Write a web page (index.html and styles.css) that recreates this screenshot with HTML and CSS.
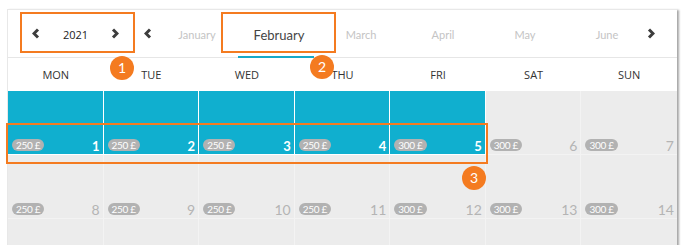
FILE: index.html
```html
<!DOCTYPE html>
<html lang="en">
<head>
    <meta charset="UTF-8">
    <meta name="viewport" content="width=device-width, initial-scale=1.0">
    <title>Price calendar</title>
    <link rel="stylesheet" href="styles.css">
</head>
<body>

    <div class="calendar">
        <div class="cal-header">
            <div class="year-nav">
                <span class="arrow"><svg width="8" height="11" viewBox="0 0 8 11"><polyline points="6,1.5 2,5.5 6,9.5" /></svg></span>
                <span class="year">2021</span>
                <span class="arrow"><svg width="8" height="11" viewBox="0 0 8 11"><polyline points="2,1.5 6,5.5 2,9.5" /></svg></span>
            </div>
            <span class="arrow month-arrow"><svg width="8" height="11" viewBox="0 0 8 11"><polyline points="6,1.5 2,5.5 6,9.5" /></svg></span>
            <div class="months">
                <span class="month">January</span>
                <span class="month active">February</span>
                <span class="month">March</span>
                <span class="month">April</span>
                <span class="month">May</span>
                <span class="month">June</span>
            </div>
            <span class="arrow month-arrow next"><svg width="8" height="11" viewBox="0 0 8 11"><polyline points="2,1.5 6,5.5 2,9.5" /></svg></span>
        </div>

        <div class="weekdays">
            <span>MON</span><span>TUE</span><span>WED</span><span>THU</span><span>FRI</span><span>SAT</span><span>SUN</span>
        </div>

        <div class="days">
            <div class="day booked"><span class="price">250 £</span><span class="num">1</span></div>
            <div class="day booked"><span class="price">250 £</span><span class="num">2</span></div>
            <div class="day booked"><span class="price">250 £</span><span class="num">3</span></div>
            <div class="day booked"><span class="price">250 £</span><span class="num">4</span></div>
            <div class="day booked"><span class="price">300 £</span><span class="num">5</span></div>
            <div class="day"><span class="price">300 £</span><span class="num">6</span></div>
            <div class="day"><span class="price">300 £</span><span class="num">7</span></div>

            <div class="day"><span class="price">250 £</span><span class="num">8</span></div>
            <div class="day"><span class="price">250 £</span><span class="num">9</span></div>
            <div class="day"><span class="price">250 £</span><span class="num">10</span></div>
            <div class="day"><span class="price">250 £</span><span class="num">11</span></div>
            <div class="day"><span class="price">300 £</span><span class="num">12</span></div>
            <div class="day"><span class="price">300 £</span><span class="num">13</span></div>
            <div class="day"><span class="price">300 £</span><span class="num">14</span></div>

            <div class="day"></div>
            <div class="day"></div>
            <div class="day"></div>
            <div class="day"></div>
            <div class="day"></div>
            <div class="day"></div>
            <div class="day"></div>
        </div>

        <!-- callouts -->
        <div class="mark mark-year"></div>
        <div class="mark mark-month"></div>
        <div class="mark mark-week"></div>
        <span class="badge badge-1">1</span>
        <span class="badge badge-2">2</span>
        <span class="badge badge-3">3</span>
    </div>

</body>
</html>
```

FILE: styles.css
```css
body {
    margin: 0;
    background: #fff;
    font-family: Lato, "Open Sans", sans-serif;
    overflow: hidden;
}
.calendar {
    position: relative;
    box-sizing: border-box;
    width: 670px;
    margin: 9px 0 0 7px;
    border-top: 1px solid #e8e8e8;
    border-left: 1px solid #e8e8e8;
    box-shadow: 2px 1px 2px rgba(0, 0, 0, 0.35);
    background: #fff;
}
.cal-header {
    display: flex;
    align-items: stretch;
    height: 47px;
    padding-left: 12px;
    border-bottom: 1px solid #e6e6e6;
}
.year-nav {
    display: flex;
    align-items: center;
    justify-content: space-between;
    width: 114px;
    padding: 0 15px 0 12px;
    box-sizing: border-box;
}
.year {
    font-family: "Open Sans", sans-serif;
    font-size: 11px;
    color: #222;
    padding-top: 2px;
}
.arrow {
    display: flex;
    align-items: center;
    justify-content: center;
}
.arrow polyline {
    fill: none;
    stroke: #3d3d3d;
    stroke-width: 3;
}
.month-arrow {
    width: 16px;
    margin-left: 6px;
}
.month-arrow.next {
    width: 8px;
    margin-left: -1px;
}
.months {
    display: flex;
}
.month {
    display: flex;
    align-items: center;
    justify-content: center;
    width: 82px;
    font-size: 11px;
    color: #c4c4c4;
    padding-top: 1px;
}
.month.active {
    font-size: 13px;
    color: #444;
    margin-bottom: -1px;
    background: linear-gradient(#16a9c8, #16a9c8) left bottom / 76px 2px no-repeat;
}
.weekdays {
    display: grid;
    grid-template-columns: repeat(7, 1fr);
    height: 33px;
    align-items: center;
    text-align: center;
    font-family: "Open Sans", sans-serif;
    font-size: 11px;
    color: #333;
}
.days {
    display: grid;
    grid-template-columns: repeat(7, 1fr);
    background: #ececec;
}
.day {
    box-sizing: border-box;
    height: 64px;
    display: flex;
    align-items: flex-end;
    justify-content: space-between;
    padding: 0 3px 0 4px;
    border-right: 1px solid #f3f3f3;
    border-bottom: 1px solid #f3f3f3;
    background: #ececec;
}
.day:nth-child(7n) {
    border-right: none;
}
.day.booked {
    background: #10afcf;
    border-color: #fff;
}
.price {
    font-size: 10px;
    line-height: 12px;
    padding: 0 4px;
    margin-bottom: 3px;
    border-radius: 6px;
    background: #b2b2b2;
    color: #fff;
    letter-spacing: -0.3px;
}
.num {
    font-size: 14px;
    line-height: 16px;
    color: #b4b4b4;
}
.booked .num {
    font-size: 13px;
    color: #fff;
    font-weight: 700;
}
.mark {
    position: absolute;
    border: 2px solid #f47b20;
    box-sizing: border-box;
}
.mark-year {
    left: 12px;
    top: 2px;
    width: 115px;
    height: 41px;
}
.mark-month {
    left: 213px;
    top: 2px;
    width: 115px;
    height: 41px;
}
.mark-week {
    left: -2px;
    top: 113px;
    width: 482px;
    height: 41px;
}
.badge {
    position: absolute;
    width: 24px;
    height: 24px;
    border-radius: 50%;
    background: #f47b20;
    color: #fff;
    font-size: 14px;
    line-height: 24px;
    text-align: center;
}
.badge-1 {
    left: 102px;
    top: 46px;
}
.badge-2 {
    left: 302px;
    top: 45px;
}
.badge-3 {
    left: 454px;
    top: 156px;
}
```
